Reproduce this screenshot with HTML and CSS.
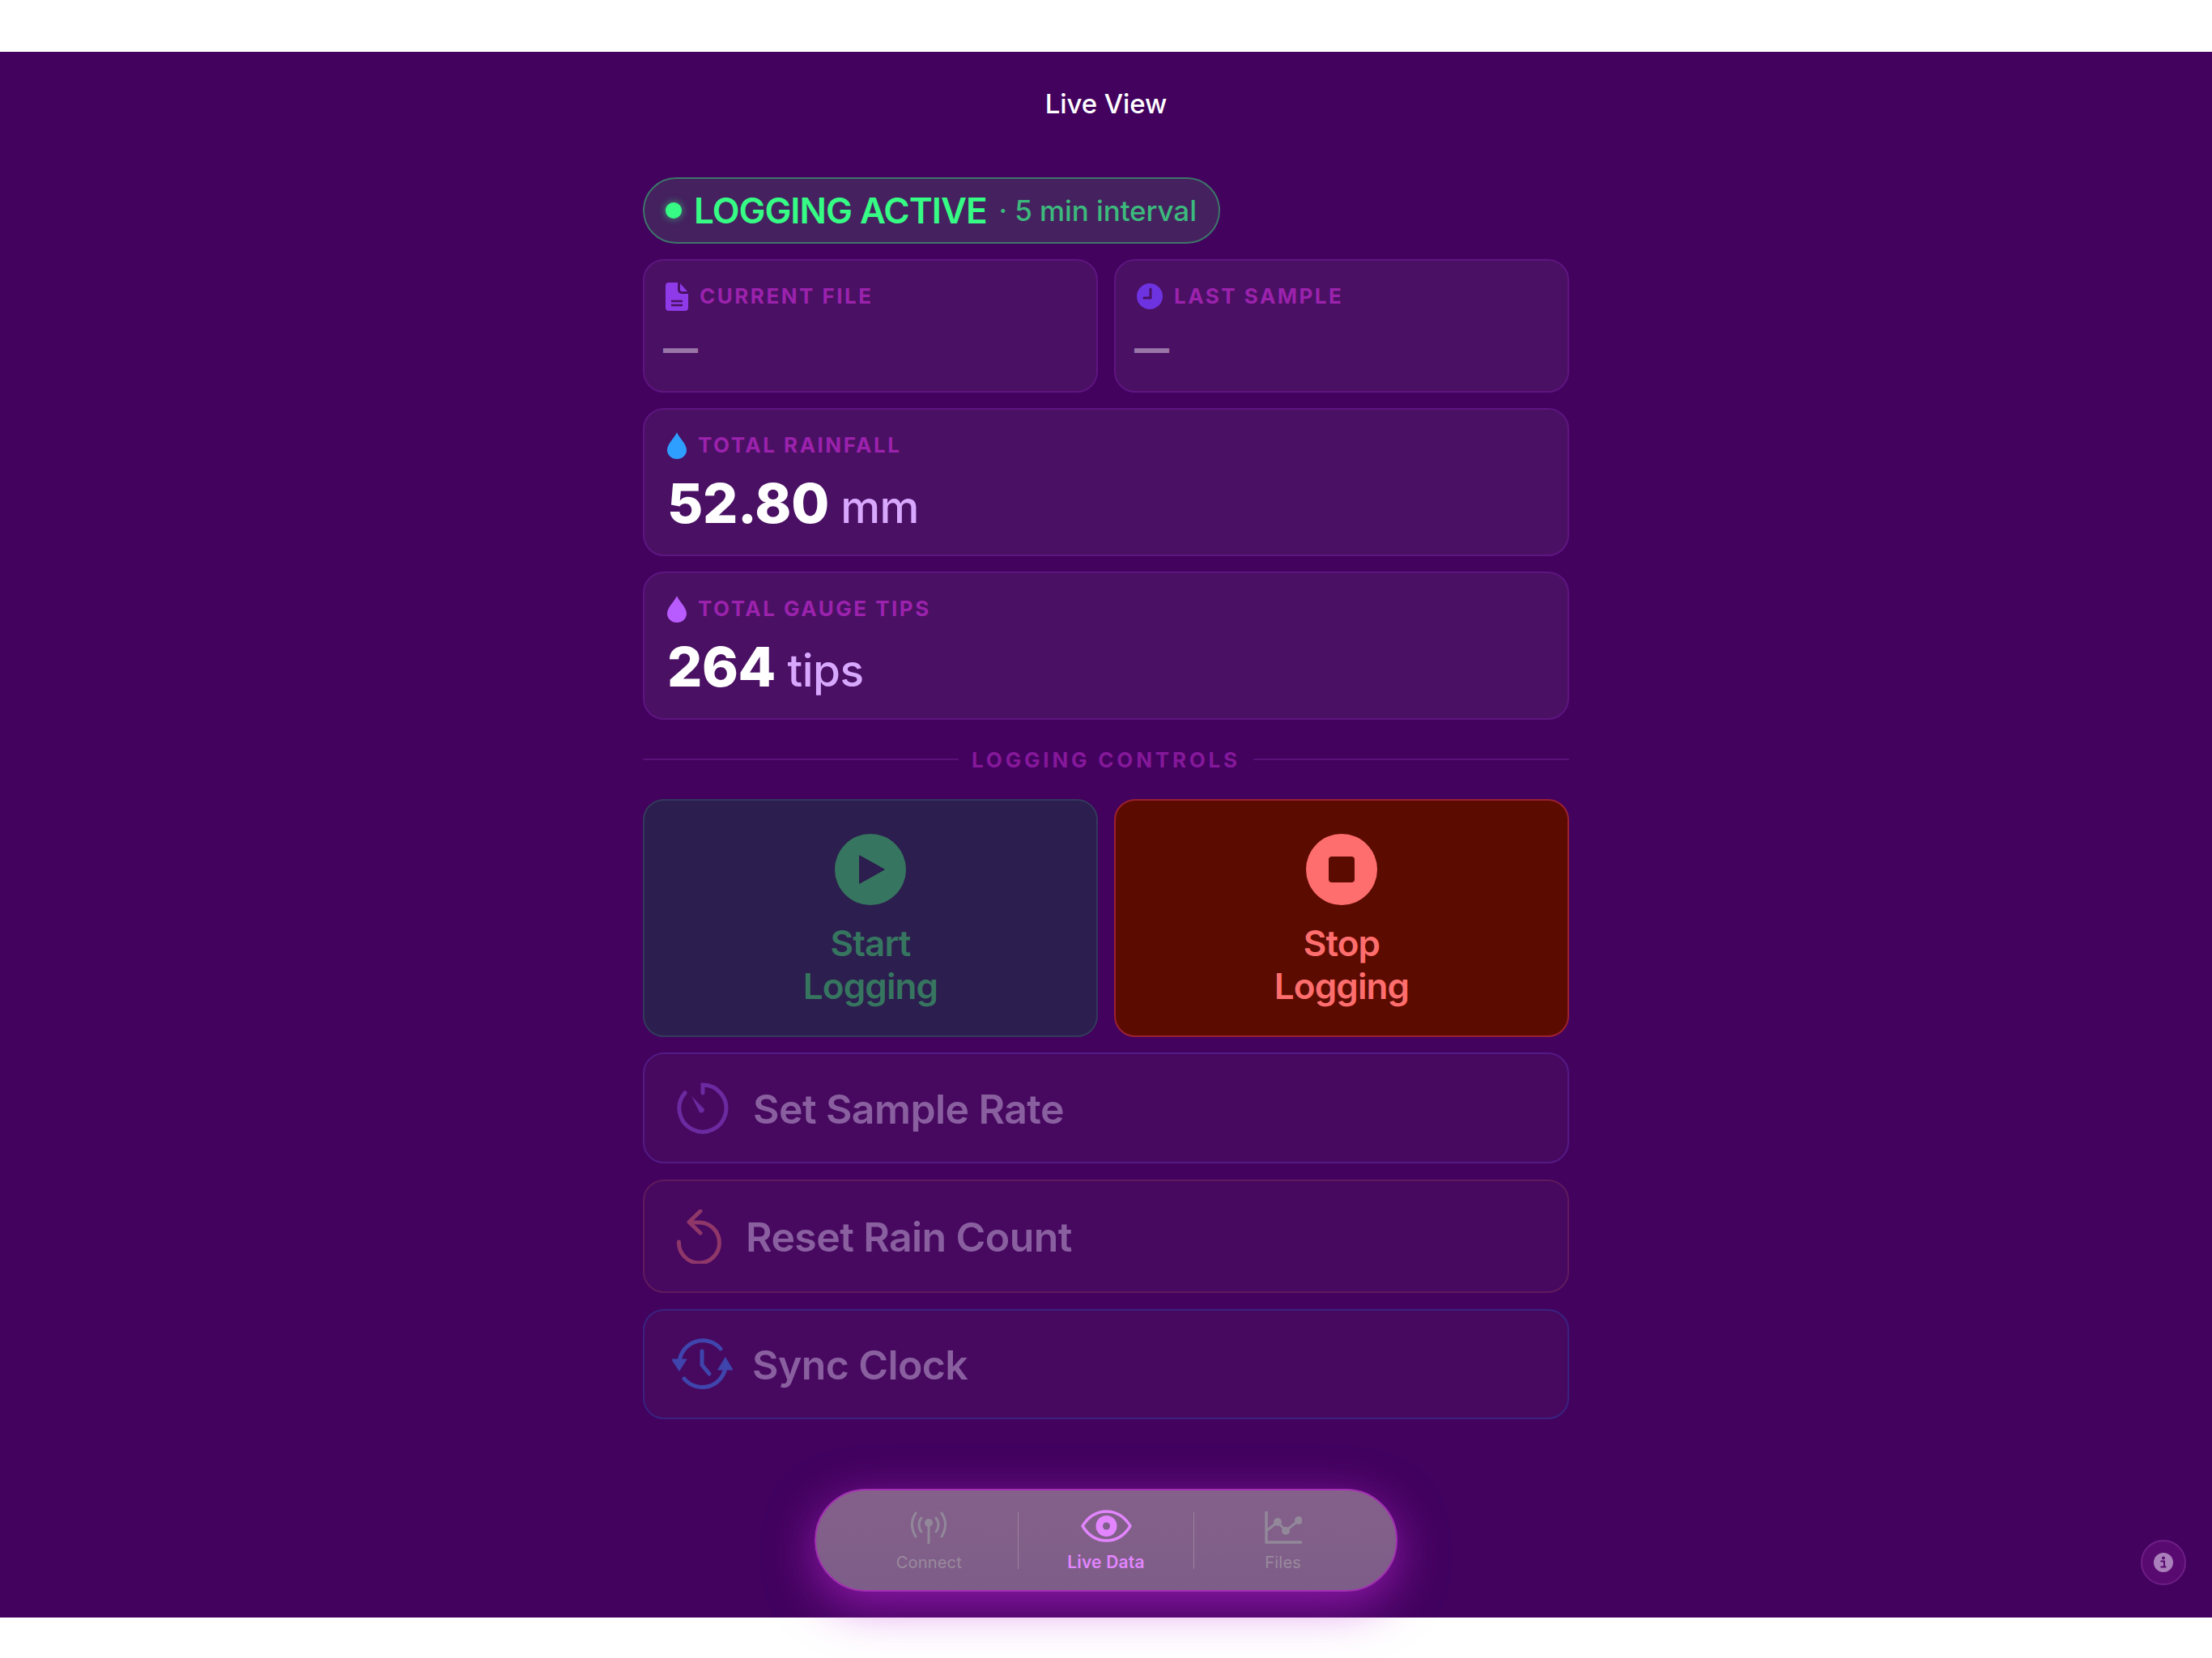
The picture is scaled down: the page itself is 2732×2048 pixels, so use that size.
FILE: index.html
```html
<!DOCTYPE html>
<html lang="en">
<head>
    <meta charset="UTF-8">
    <title>Live View</title>
    <link rel="stylesheet" href="styles.css">
</head>
<body>
    <div class="screen">
        <h1 class="title">Live View</h1>

        <main class="content">
            <!-- Status pill -->
            <div class="status-pill">
                <span class="status-dot"></span>
                <span class="status-main">LOGGING ACTIVE</span>
                <span class="status-sub">· 5 min interval</span>
            </div>

            <!-- File and sample cards -->
            <div class="two-col">
                <div class="card card-small">
                    <div class="card-label">
                        <svg class="icon-file" viewBox="0 0 28 35">
                            <path d="M4 0H15V9a5 5 0 0 0 5 5H28V31a4 4 0 0 1-4 4H4a4 4 0 0 1-4-4V4a4 4 0 0 1 4-4Z" fill="#8f3ae8"/>
                            <path d="M18 1L27 11H20a2 2 0 0 1-2-2Z" fill="#8f3ae8"/>
                            <path d="M7 23H21M7 28H21" stroke="#4a1063" stroke-width="2.4"/>
                        </svg>
                        <span>CURRENT FILE</span>
                    </div>
                    <div class="card-dash">—</div>
                </div>
                <div class="card card-small">
                    <div class="card-label">
                        <svg class="icon-clock" viewBox="0 0 32 32">
                            <circle cx="16" cy="16" r="16" fill="#6d33e0"/>
                            <path d="M17 7V18H9" fill="none" stroke="#4a1063" stroke-width="3" stroke-linecap="round" stroke-linejoin="round"/>
                        </svg>
                        <span>LAST SAMPLE</span>
                    </div>
                    <div class="card-dash">—</div>
                </div>
            </div>

            <!-- Totals -->
            <div class="card card-total">
                <div class="card-label">
                    <svg class="icon-drop" viewBox="0 0 24 33"><path d="M12 0C14 6 24 14 24 22A12 11 0 0 1 0 22C0 14 10 6 12 0Z" fill="#2e9fff"/></svg>
                    <span>TOTAL RAINFALL</span>
                </div>
                <div class="total-value">52.80 <span class="total-unit">mm</span></div>
            </div>
            <div class="card card-total">
                <div class="card-label">
                    <svg class="icon-drop" viewBox="0 0 24 33"><path d="M12 0C14 6 24 14 24 22A12 11 0 0 1 0 22C0 14 10 6 12 0Z" fill="#b95cff"/></svg>
                    <span>TOTAL GAUGE TIPS</span>
                </div>
                <div class="total-value">264 <span class="total-unit">tips</span></div>
            </div>

            <div class="section-title"><span>LOGGING CONTROLS</span></div>

            <!-- Start / stop -->
            <div class="two-col">
                <div class="big-button start">
                    <svg class="big-icon" viewBox="0 0 88 88">
                        <circle cx="44" cy="44" r="44" fill="#36755f"/>
                        <path d="M31 27.5L60.500 44L31 60.500Z" fill="#2c1e4e" stroke="#2c1e4e" stroke-width="2" stroke-linejoin="round"/>
                    </svg>
                    <div>Start<br>Logging</div>
                </div>
                <div class="big-button stop">
                    <svg class="big-icon" viewBox="0 0 88 88">
                        <circle cx="44" cy="44" r="44" fill="#ff6e6e"/>
                        <rect x="28" y="28" width="32" height="32" rx="4" fill="#5c0b00"/>
                    </svg>
                    <div>Stop<br>Logging</div>
                </div>
            </div>

            <!-- Other actions -->
            <div class="row row-rate">
                <svg class="icon-rate" viewBox="0 0 64 64" fill="none" stroke="#6b2aa0" stroke-width="5" stroke-linecap="round">
                    <path d="M32 13V3A29 29 0 1 1 10 13"/>
                    <path d="M18 17L34 33A4 4 0 0 1 28 37Z" fill="#6b2aa0" stroke="none"/>
                </svg>
                <span>Set Sample Rate</span>
            </div>
            <div class="row row-reset">
                <svg class="icon-reset" viewBox="0 0 55 67" fill="none" stroke="#8f3769" stroke-width="5" stroke-linecap="round" stroke-linejoin="round">
                    <path d="M2.500 40A25 25 0 1 0 27 16H16"/>
                    <path d="M29 2L15 15.500L29 29"/>
                </svg>
                <span>Reset Rain Count</span>
            </div>
            <div class="row row-sync">
                <svg class="icon-sync" viewBox="0 0 75 64" fill="none" stroke="#3f45ad" stroke-width="5" stroke-linecap="round" stroke-linejoin="round">
                    <path d="M9 30A29 29 0 0 1 60 13"/>
                    <path d="M66 36A29 29 0 0 1 15 50"/>
                    <path d="M37 16V33L46 44"/>
                    <path d="M0 26H18L9 40Z" fill="#3f45ad" stroke="#3f45ad" stroke-width="1"/>
                    <path d="M57 39H75L66 24Z" fill="#3f45ad" stroke="#3f45ad" stroke-width="1"/>
                </svg>
                <span>Sync Clock</span>
            </div>
        </main>

        <!-- Floating tab bar -->
        <nav class="tabbar">
            <div class="tab">
                <svg class="tab-icon" width="46" height="40" viewBox="0 0 46 40" fill="none" stroke="#92889a" stroke-width="3" stroke-linecap="round">
                    <path d="M23 14V39"/>
                    <circle cx="23" cy="14" r="3.500" fill="#92889a"/>
                    <path d="M7 2C1 11 1 21 7 31M39 2C45 11 45 21 39 31"/>
                    <path d="M14 8C10 13 10 20 14 25M32 8C36 13 36 20 32 25"/>
                </svg>
                <div>Connect</div>
            </div>
            <div class="tab tab-active">
                <svg class="tab-icon" width="63" height="40" viewBox="0 0 63 40">
                    <path d="M2 20C10 7 20 2 31.500 2S53 7 61 20C53 33 43 38 31.500 38S10 33 2 20Z" fill="none" stroke="#e285ff" stroke-width="3.500" stroke-linejoin="round"/>
                    <circle cx="31.500" cy="20" r="13" fill="#e285ff"/>
                    <circle cx="31.500" cy="20" r="4.500" fill="#7f5f8b"/>
                </svg>
                <div>Live Data</div>
            </div>
            <div class="tab">
                <svg class="tab-icon" width="46" height="40" viewBox="0 0 46 40" fill="none" stroke="#92889a" stroke-width="3" stroke-linecap="round">
                    <path d="M2 1V38H45" stroke-width="3.500"/>
                    <path d="M2 24L16 13L26 24L42 11"/>
                    <circle cx="16" cy="13" r="3.500" fill="#92889a"/>
                    <circle cx="26" cy="24" r="3.500" fill="#92889a"/>
                    <circle cx="42" cy="11" r="3.500" fill="#92889a"/>
                </svg>
                <div>Files</div>
            </div>
        </nav>

        <!-- Info button -->
        <div class="info-button">
            <svg width="24" height="24" viewBox="0 0 24 24">
                <circle cx="12" cy="12" r="12" fill="#aa7fbb"/>
                <circle cx="12" cy="6.500" r="2" fill="#590a70"/>
                <path d="M8.500 10.500H13V17M8.500 17.500H15.500" fill="none" stroke="#590a70" stroke-width="2"/>
            </svg>
        </div>
    </div>
</body>
</html>
```

FILE: styles.css
```css
* {
    box-sizing: border-box;
    margin: 0;
    padding: 0;
    font-family: Inter, 'Noto Sans', sans-serif;
}

body {
    background: white;
    height: 2048px;
    overflow: hidden;
}

.screen {
    position: relative;
    margin-top: 64px;
    height: 1934px;
    background: #42025e;
}

.title {
    height: 155px;
    padding-top: 44px;
    color: white;
    font-size: 33px;
    line-height: 40px;
    font-weight: 500;
    letter-spacing: -0.1px;
    text-align: center;
}

.content {
    width: 1144px;
    margin: 0 auto;
    display: flex;
    flex-direction: column;
    gap: 19px;
}

/* Status pill */
.status-pill {
    align-self: flex-start;
    width: 713px;
    height: 82px;
    display: flex;
    align-items: center;
    padding-left: 26px;
    background: #45215f;
    border: 2px solid #3d7569;
    border-radius: 41px;
}

.status-dot {
    width: 20px;
    height: 20px;
    margin-right: 15px;
    border-radius: 50%;
    background: #36fb84;
    box-shadow: 0 0 10px rgba(54, 251, 132, 0.6);
}

.status-main {
    color: #36fb84;
    font-size: 44px;
    font-weight: 600;
    letter-spacing: -1px;
}

.status-sub {
    margin-left: 15px;
    color: #3cb97c;
    font-size: 35px;
    font-weight: 500;
    letter-spacing: -0.1px;
}

/* Cards */
.two-col {
    display: grid;
    grid-template-columns: 1fr 1fr;
    gap: 20px;
}

.card {
    background: #4a1063;
    border: 2px solid #5f1580;
    border-radius: 26px;
}

.card-small {
    height: 165px;
    padding: 26px 26px 0;
}

.card-total {
    height: 183px;
    padding: 26px 28px 0;
}

.card-label {
    display: flex;
    align-items: center;
    gap: 14px;
    color: #9b22ad;
    font-size: 26px;
    font-weight: 700;
    letter-spacing: 2.5px;
    line-height: 36px;
}

.icon-file {
    width: 28px;
    height: 35px;
}

.icon-clock {
    width: 32px;
    height: 32px;
}

.icon-drop {
    width: 24px;
    height: 33px;
}

.card-dash {
    margin-top: 21px;
    margin-left: -3px;
    color: #9a76a8;
    font-size: 43px;
    font-weight: 800;
    line-height: 50px;
}

.total-value {
    margin-top: 12px;
    color: white;
    font-size: 68px;
    font-weight: 800;
    letter-spacing: -0.4px;
    line-height: 82px;
}

.total-unit {
    color: #d8a8ff;
    font-size: 55px;
    font-weight: 500;
    letter-spacing: -0.5px;
}

/* Section title */
.section-title {
    display: flex;
    align-items: center;
    gap: 16px;
    height: 60px;
    color: #85189a;
    font-size: 26px;
    font-weight: 700;
    letter-spacing: 3.8px;
}

.section-title::before,
.section-title::after {
    content: '';
    flex: 1;
    height: 2px;
    background: #5a1078;
}

/* Start / stop buttons */
.big-button {
    height: 294px;
    display: flex;
    flex-direction: column;
    align-items: center;
    gap: 21px;
    padding-top: 41px;
    border: 2px solid;
    border-radius: 26px;
    font-size: 44px;
    font-weight: 600;
    letter-spacing: -0.9px;
    line-height: 53px;
    text-align: center;
}

.big-icon {
    width: 88px;
    height: 88px;
}

.start {
    background: #2c1e4e;
    border-color: #33395c;
    color: #36755f;
}

.stop {
    background: #5c0b00;
    border-color: #9a2030;
    color: #ff6e6e;
}

/* Action rows */
.row {
    display: flex;
    align-items: center;
    gap: 30px;
    padding-left: 40px;
    background: #46095f;
    border: 2px solid;
    border-radius: 26px;
    color: #8a5fa0;
    font-size: 50px;
    font-weight: 600;
    letter-spacing: -0.6px;
}

.row span {
    padding-top: 2px;
}

.row-rate {
    height: 137px;
    border-color: #541a84;
}

.row-reset {
    height: 140px;
    margin-top: 1px;
    border-color: #601a5e;
}

.row-sync {
    height: 136px;
    margin-top: 1px;
    border-color: #3b2280;
}

.icon-rate {
    width: 64px;
    height: 64px;
}

.icon-reset {
    width: 55px;
    height: 67px;
}

.icon-sync {
    width: 75px;
    height: 64px;
    margin-left: -6px;
    margin-right: -6px;
}

/* Tab bar */
.tabbar {
    position: absolute;
    left: 1006px;
    top: 1775px;
    width: 720px;
    height: 127px;
    display: flex;
    padding: 27px 30px 0;
    background: linear-gradient(#84608a, #7d5e88);
    border: 2px solid #a430b4;
    border-radius: 64px;
    box-shadow: 0 16px 60px rgba(190, 40, 215, 0.62);
}

.tab {
    width: 219px;
    height: 70px;
    display: flex;
    flex-direction: column;
    align-items: center;
    color: #9a8a9d;
    font-size: 20px;
    line-height: 26px;
    font-weight: 400;
    letter-spacing: 0.2px;
}

.tab-icon {
    display: block;
    flex-shrink: 0;
    margin-top: -1px;
    margin-bottom: 10px;
}

.tab-active {
    color: #e285ff;
    font-size: 21px;
    font-weight: 600;
    border-left: 1px solid #9c829f;
    border-right: 1px solid #9c829f;
}

.tab-active .tab-icon {
    margin-top: -3px;
    margin-bottom: 12px;
}

/* Info button */
.info-button {
    position: absolute;
    left: 2644px;
    top: 1838px;
    width: 56px;
    height: 56px;
    display: flex;
    align-items: center;
    justify-content: center;
    background: #590a70;
    border: 2px solid #6e1e85;
    border-radius: 50%;
}
```
